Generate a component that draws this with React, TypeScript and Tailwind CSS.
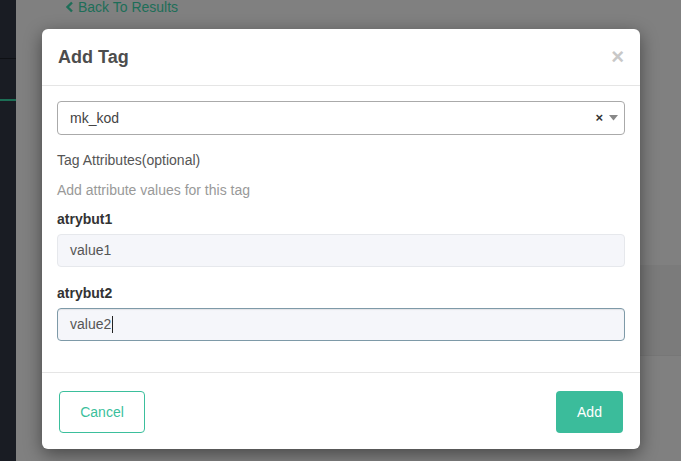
import React from 'react'

function ChevronLeft() {
  return (
    <svg width="9" height="12" viewBox="0 0 9 12" className="mr-[4px]">
      <path d="M7 1.5 L2.5 6 L7 10.5" fill="none" stroke="currentColor" strokeWidth="2.4" />
    </svg>
  )
}

function Field({ label, value, focused }: { label: string; value: string; focused?: boolean }) {
  return (
    <div className="flex flex-col">
      <label className="text-[14px] font-bold leading-[18px] text-[#333]">{label}</label>
      <div
        className={`mt-[6px] flex h-[33px] items-center rounded-[4px] border bg-[#f5f6fa] px-[12px] text-[14px] text-[#555] ${
          focused ? 'border-[#7e9aa8] shadow-[inset_0_1px_1px_rgba(0,0,0,0.08)]' : 'border-[#e6e8ec]'
        }`}
      >
        {value}
        {focused && <span className="ml-[1px] inline-block h-[17px] w-px bg-[#222]" />}
      </div>
    </div>
  )
}

export default function App() {
  return (
    <div
      className="relative flex h-[461px] w-[681px] overflow-hidden bg-[#808080]"
      style={{ fontFamily: '"Liberation Sans", Arial, sans-serif' }}
    >
      {/* sidebar behind the overlay */}
      <div className="flex w-[16px] flex-col bg-[#191c23]">
        <div className="mt-[58px] h-px bg-[#0e1014]" />
        <div className="mt-[40px] h-[2px] bg-[#1c6e55]" />
      </div>

      {/* page behind the overlay */}
      <div className="flex flex-1 flex-col">
        <div className="flex h-[14px] items-center pl-[49px] text-[14px] leading-[14px] text-[#1d6e58]">
          <ChevronLeft />
          <span>Back To Results</span>
        </div>
        <div className="mt-[251px] ml-[624px] h-[90px] bg-[#7b7b7b]" />
        <div className="ml-[36px] h-px bg-[#777]" />
      </div>

      {/* modal */}
      <div className="absolute left-[42px] top-[29px] flex h-[420px] w-[598px] flex-col rounded-[6px] bg-white shadow-[0_5px_18px_rgba(0,0,0,0.45)]">
        <div className="flex h-[57px] items-center justify-between border-b border-[#e5e5e5] pl-[16px] pr-[16px]">
          <h4 className="text-[18px] font-bold text-[#4d4d4d]">Add Tag</h4>
          <span className="text-[22px] font-bold leading-none text-[#c8c8c8]">×</span>
        </div>

        <div className="flex flex-col px-[15px] pt-[15px]">
          <div className="flex h-[34px] items-center justify-between rounded-[4px] border border-[#aaa] pl-[12px] pr-[6px] text-[14px] text-[#444]">
            <span>mk_kod</span>
            <span className="flex items-center gap-[6px]">
              <span className="text-[13px] font-bold text-[#333]">×</span>
              <svg width="9" height="6" viewBox="0 0 9 6">
                <path d="M0 0 H9 L4.5 5.5 Z" fill="#888" />
              </svg>
            </span>
          </div>

          <div className="mt-[16px] text-[14px] leading-[18px] text-[#555]">Tag Attributes(optional)</div>
          <div className="mt-[12px] text-[14px] leading-[18px] text-[#999]">Add attribute values for this tag</div>

          <div className="mt-[11px] flex flex-col gap-[17px]">
            <Field label="atrybut1" value="value1" />
            <Field label="atrybut2" value="value2" focused />
          </div>
        </div>

        <div className="mt-auto flex h-[77px] items-center justify-between border-t border-[#e5e5e5] pl-[17px] pr-[17px]">
          <button className="mt-[2px] h-[42px] w-[86px] rounded-[4px] border border-[#3bbf9c] bg-white text-[14px] text-[#3bbf9c]">
            Cancel
          </button>
          <button className="mt-[2px] h-[42px] w-[67px] rounded-[4px] bg-[#3bbc9b] text-[14px] text-white">Add</button>
        </div>
      </div>
    </div>
  )
}
